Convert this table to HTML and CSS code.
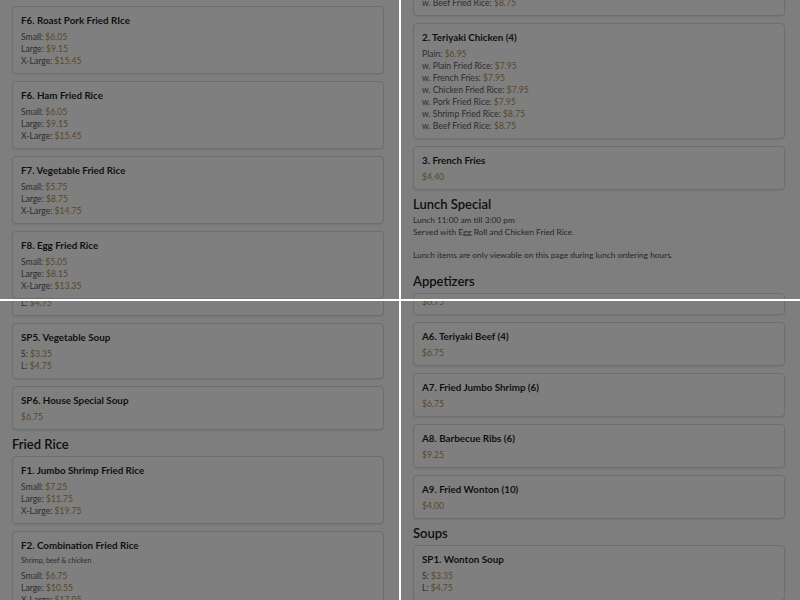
FILE: index.html
```html
<!DOCTYPE html>
<html lang="en">
<head>
<meta charset="utf-8">
<title>Menu</title>
<link rel="stylesheet" href="styles.css">
</head>
<body>
<div class="grid">

  <section class="tile">
    <div class="page start-6">
      <div class="card">
        <div class="name">F6. Roast Pork Fried RIce</div>
        <div class="line">Small: <span class="price">$6.05</span></div>
        <div class="line">Large: <span class="price">$9.15</span></div>
        <div class="line">X-Large: <span class="price">$15.45</span></div>
      </div>
      <div class="card">
        <div class="name">F6. Ham Fried Rice</div>
        <div class="line">Small: <span class="price">$6.05</span></div>
        <div class="line">Large: <span class="price">$9.15</span></div>
        <div class="line">X-Large: <span class="price">$15.45</span></div>
      </div>
      <div class="card">
        <div class="name">F7. Vegetable Fried Rice</div>
        <div class="line">Small: <span class="price">$5.75</span></div>
        <div class="line">Large: <span class="price">$8.75</span></div>
        <div class="line">X-Large: <span class="price">$14.75</span></div>
      </div>
      <div class="card">
        <div class="name">F8. Egg Fried Rice</div>
        <div class="line">Small: <span class="price">$5.05</span></div>
        <div class="line">Large: <span class="price">$8.15</span></div>
        <div class="line">X-Large: <span class="price">$13.35</span></div>
      </div>
    </div>
    <div class="shade"></div>
  </section>

  <section class="tile">
    <div class="page">
      <div class="card card-tail tail-4">
        <div class="line">w. Beef Fried Rice: <span class="price">$8.75</span></div>
      </div>
      <div class="card">
        <div class="name">2. Teriyaki Chicken (4)</div>
        <div class="line">Plain: <span class="price">$6.95</span></div>
        <div class="line">w. Plain Fried Rice: <span class="price">$7.95</span></div>
        <div class="line">w. French Fries: <span class="price">$7.95</span></div>
        <div class="line">w. Chicken Fried Rice: <span class="price">$7.95</span></div>
        <div class="line">w. Pork Fried Rice: <span class="price">$7.95</span></div>
        <div class="line">w. Shrimp Fried Rice: <span class="price">$8.75</span></div>
        <div class="line">w. Beef Fried Rice: <span class="price">$8.75</span></div>
      </div>
      <div class="card">
        <div class="name">3. French Fries</div>
        <div class="line"><span class="price">$4.40</span></div>
      </div>
      <h2 class="section">Lunch Special</h2>
      <p class="note">Lunch 11:00 am till 3:00 pm<br>Served with Egg Roll and Chicken Fried Rice.</p>
      <p class="note">Lunch items are only viewable on this page during lunch ordering hours.</p>
      <h2 class="section">Appetizers</h2>
      <div class="card card-head"></div>
    </div>
    <div class="shade"></div>
  </section>

  <section class="tile">
    <div class="page">
      <div class="card card-tail tail-5">
        <div class="line">L: <span class="price">$4.75</span></div>
      </div>
      <div class="card">
        <div class="name">SP5. Vegetable Soup</div>
        <div class="line">S: <span class="price">$3.35</span></div>
        <div class="line">L: <span class="price">$4.75</span></div>
      </div>
      <div class="card">
        <div class="name">SP6. House Special Soup</div>
        <div class="line"><span class="price">$6.75</span></div>
      </div>
      <h2 class="section">Fried Rice</h2>
      <div class="card">
        <div class="name">F1. Jumbo Shrimp Fried Rice</div>
        <div class="line">Small: <span class="price">$7.25</span></div>
        <div class="line">Large: <span class="price">$11.75</span></div>
        <div class="line">X-Large: <span class="price">$19.75</span></div>
      </div>
      <div class="card">
        <div class="name">F2. Combination Fried Rice</div>
        <div class="desc">Shrimp, beef &amp; chicken</div>
        <div class="line">Small: <span class="price">$6.75</span></div>
        <div class="line">Large: <span class="price">$10.55</span></div>
        <div class="line">X-Large: <span class="price">$17.05</span></div>
      </div>
    </div>
    <div class="shade"></div>
  </section>

  <section class="tile">
    <div class="page">
      <div class="card card-tail tail-6">
        <div class="line"><span class="price">$6.75</span></div>
      </div>
      <div class="card">
        <div class="name">A6. Teriyaki Beef (4)</div>
        <div class="line"><span class="price">$6.75</span></div>
      </div>
      <div class="card">
        <div class="name">A7. Fried Jumbo Shrimp (6)</div>
        <div class="line"><span class="price">$6.75</span></div>
      </div>
      <div class="card">
        <div class="name">A8. Barbecue Ribs (6)</div>
        <div class="line"><span class="price">$9.25</span></div>
      </div>
      <div class="card">
        <div class="name">A9. Fried Wonton (10)</div>
        <div class="line"><span class="price">$4.00</span></div>
      </div>
      <h2 class="section">Soups</h2>
      <div class="card">
        <div class="name">SP1. Wonton Soup</div>
        <div class="line">S: <span class="price">$3.35</span></div>
        <div class="line">L: <span class="price">$4.75</span></div>
      </div>
    </div>
    <div class="shade"></div>
  </section>

</div>
</body>
</html>
```

FILE: styles.css
```css
html, body {
  margin: 0;
  padding: 0;
  background: #ffffff;
}

body {
  font-family: "Lato", "Noto Sans", sans-serif;
  color: #333333;
}

.grid {
  display: grid;
  grid-template-columns: 399px 399px;
  grid-template-rows: 299px 299px;
  gap: 2px;
  width: 800px;
  height: 600px;
}

.tile {
  position: relative;
  overflow: hidden;
  background: #fdfdfd;
}

.page {
  padding: 0 15px 0 12px;
}

.start-6 { padding-top: 6px; }

.shade {
  position: absolute;
  inset: 0;
  background: rgba(0, 0, 0, 0.5);
}

.card {
  background: #ffffff;
  border: 1px solid #dcdcdc;
  border-radius: 4px;
  box-shadow: 0 1px 2px rgba(0, 0, 0, 0.08);
  padding: 7px 8px 7px;
  margin-bottom: 7px;
}

/* card continuing from above the visible area */
.card-tail {
  border-top: 0;
  border-radius: 0 0 4px 4px;
  padding-top: 0;
}

.tail-4 { margin-top: -4px; }
.tail-5 { margin-top: -5px; }
.tail-6 { margin-top: -6px; }

/* card whose body lies below the visible area */
.card-head {
  height: 40px;
  padding: 0;
}

.name {
  font-size: 9.8px;
  line-height: 12px;
  font-weight: 700;
  color: #1f1f1f;
  margin-bottom: 4px;
  white-space: nowrap;
}

.desc {
  font-size: 7px;
  line-height: 10px;
  color: #555555;
  margin-bottom: 4px;
}

.line {
  font-size: 8.6px;
  line-height: 12px;
  color: #5a5a5a;
  white-space: nowrap;
  padding-top: 1px;
  margin-bottom: -1px;
}

.price {
  color: #b48f4c;
}

.section {
  font-size: 13px;
  line-height: 15px;
  font-weight: 600;
  color: #222222;
  margin: 0 0 4px;
}

.note {
  font-size: 8.3px;
  line-height: 12px;
  color: #4f4f4f;
  margin: -2px 0 13px;
}
```
